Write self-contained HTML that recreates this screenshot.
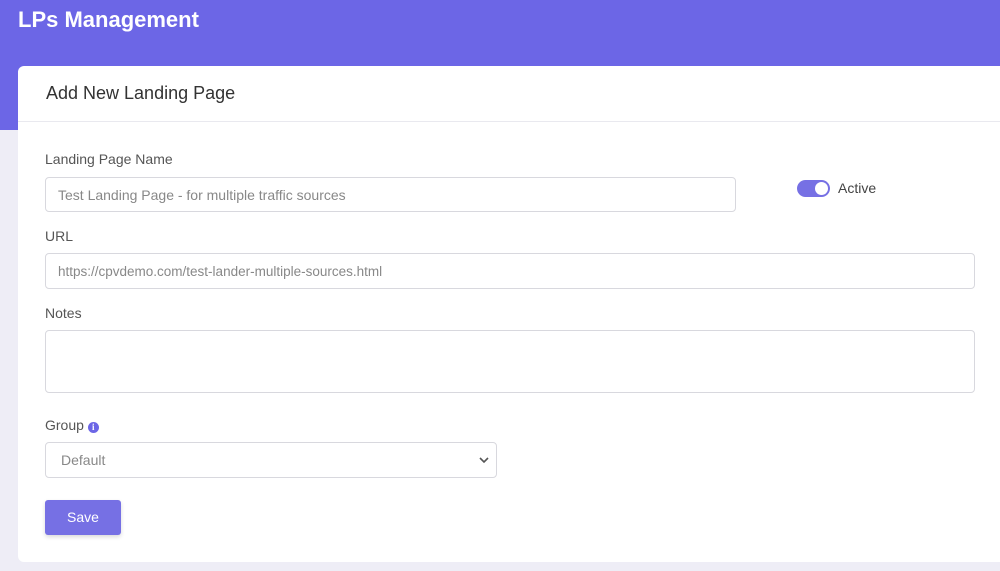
<!DOCTYPE html>
<html><head><style>
*{box-sizing:border-box;margin:0;padding:0}
body{width:1000px;height:571px;overflow:hidden;background:#eeedf6;font-family:"Liberation Sans",sans-serif;position:relative}
.hdr{position:absolute;left:0;top:0;width:1000px;height:130px;background:#6c66e6}
.title{position:absolute;left:18px;top:7px;color:#fff;font-size:22px;font-weight:bold}
.card{position:absolute;left:18px;top:66px;width:1000px;height:496px;background:#fff;border-radius:6px}
.ch{position:absolute;left:0;top:0;width:100%;height:56px;border-bottom:1px solid #e9e9ef}
.ch span{position:absolute;left:28px;top:17px;font-size:18px;color:#333}
.lbl{position:absolute;font-size:14px;color:#555}
.inp{position:absolute;border:1px solid #d8d8de;border-radius:4px;background:#fff;font-size:14px;color:#888;padding-left:12px;display:flex;align-items:center}
</style></head><body>
<div class="hdr"></div>
<div class="title">LPs Management</div>
<div class="card">
<div class="ch"><span>Add New Landing Page</span></div>
</div>
<div class="lbl" style="left:45px;top:151px">Landing Page Name</div>
<div class="inp" style="left:45px;top:177px;width:691px;height:35px">Test Landing Page - for multiple traffic sources</div>
<div style="position:absolute;left:797px;top:180px;width:33px;height:17px;border-radius:9px;background:#7670e4"><div style="position:absolute;right:2px;top:2px;width:13px;height:13px;border-radius:50%;background:#fff"></div></div>
<div class="lbl" style="left:838px;top:180px;color:#444">Active</div>
<div class="lbl" style="left:45px;top:228px">URL</div>
<div class="inp" style="left:45px;top:253px;width:930px;height:36px;font-size:13.5px">https://cpvdemo.com/test-lander-multiple-sources.html</div>
<div class="lbl" style="left:45px;top:305px">Notes</div>
<div class="inp" style="left:45px;top:330px;width:930px;height:63px"></div>
<div class="lbl" style="left:45px;top:417px">Group <span style="display:inline-block;width:11px;height:11px;border-radius:50%;background:#6c66e6;color:#fff;font-size:9px;font-weight:bold;text-align:center;line-height:11px;font-family:'Liberation Serif',serif">i</span></div>
<div class="inp" style="left:45px;top:442px;width:452px;height:36px;padding-left:15px">Default<svg style="position:absolute;right:7px;top:14px" width="10" height="7" viewBox="0 0 10 7"><path d="M1 1l4 4 4-4" stroke="#555" stroke-width="1.6" fill="none"/></svg></div>
<div style="position:absolute;left:45px;top:500px;width:76px;height:35px;background:#7670e4;border-radius:3px;color:#fff;font-size:14px;text-align:center;line-height:35px;box-shadow:0 2px 4px rgba(0,0,0,.15)">Save</div>
</body></html>
